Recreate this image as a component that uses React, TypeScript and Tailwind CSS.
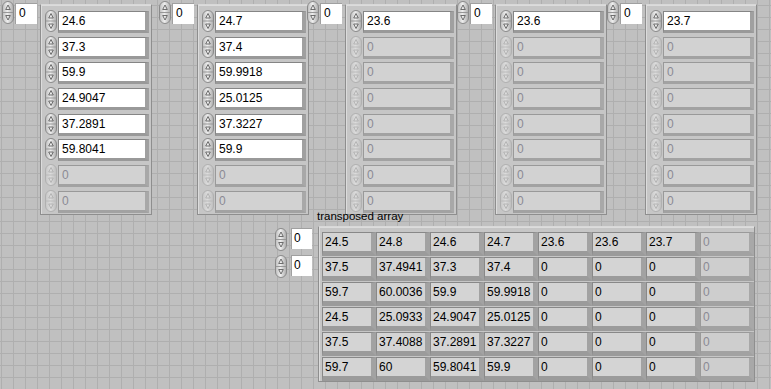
import React from "react";

function Spinner({ disabled = false, h = 22 }: { disabled?: boolean; h?: number }) {
  const mid = h / 2;
  const arrow = disabled ? "#b0b0b0" : "#606060";
  return (
    <svg width="12" height={h} viewBox={`0 0 12 ${h}`} className="block shrink-0">
      <defs>
        <linearGradient id="spg" x1="0" y1="0" x2="1" y2="0">
          <stop offset="0" stopColor="#bcbcbc" />
          <stop offset="0.45" stopColor="#eeeeee" />
          <stop offset="1" stopColor="#aaaaaa" />
        </linearGradient>
        <linearGradient id="spgd" x1="0" y1="0" x2="1" y2="0">
          <stop offset="0" stopColor="#c6c6c6" />
          <stop offset="0.45" stopColor="#dcdcdc" />
          <stop offset="1" stopColor="#bdbdbd" />
        </linearGradient>
      </defs>
      <rect
        x="0.5"
        y="0.5"
        width="11"
        height={h - 1}
        rx="5.5"
        fill={disabled ? "url(#spgd)" : "url(#spg)"}
        stroke={disabled ? "#b0b0b0" : "#8a8a8a"}
      />
      <line x1="1" y1={mid} x2="11" y2={mid} stroke={disabled ? "#bababa" : "#979797"} strokeWidth="1" />
      <path d={`M6 ${mid - 7.5} L8.3 ${mid - 3} H3.7 Z`} fill="none" stroke={arrow} strokeWidth="0.9" />
      <path d={`M3.7 ${mid + 3} H8.3 L6 ${mid + 7.5} Z`} fill="none" stroke={arrow} strokeWidth="0.9" />
    </svg>
  );
}

function IndexBox({ small = false }: { small?: boolean }) {
  return (
    <div className="flex items-start">
      <div className="mt-[1px]">
        <Spinner h={23} />
      </div>
      <div
        className={
          small
            ? "ml-[4px] mt-[1px] w-[21px] h-[21px] bg-white border-t border-l border-t-[#a0a0a0] border-l-[#a0a0a0] pl-[2px] text-[12px] leading-[19px] text-black"
            : "ml-[1px] mt-[3px] w-[22px] h-[21px] bg-white border-t border-l border-t-[#a0a0a0] border-l-[#a0a0a0] pl-[3px] text-[12px] leading-[19px] text-black"
        }
      >
        0
      </div>
    </div>
  );
}

function Elem({ value, disabled }: { value: string; disabled?: boolean }) {
  return (
    <div className="flex items-start h-[22px]">
      <div className="mt-[-1px]">
        <Spinner disabled={disabled} h={22} />
      </div>
      <div
        className={
          disabled
            ? "ml-[1px] w-[91px] h-[22px] border-t border-l border-r-[4px] border-b-[3px] border-t-[#999999] border-l-[#999999] border-r-[#a8a8a8] border-b-[#a2a2a2] bg-[#d2d2d2] pl-[3px] text-[12px] leading-[18px] text-[#8a8a94]"
            : "ml-[1px] w-[91px] h-[22px] border-t border-l border-r-[4px] border-b-[3px] border-t-[#858585] border-l-[#858585] border-r-[#a0a0a0] border-b-[#999999] bg-white pl-[3px] text-[12px] leading-[18px] text-black"
        }
      >
        {value}
      </div>
    </div>
  );
}

function Array1D({ values, ml }: { values: string[]; ml: string }) {
  const items: { v: string; d: boolean }[] = values.map((v) => ({ v, d: false }));
  while (items.length < 8) items.push({ v: "0", d: true });
  return (
    <div className={`flex items-start shrink-0 ${ml}`}>
      <IndexBox />
      <div className="ml-[3px] mt-[4px] w-[112px] border border-t-[#d8d8d8] border-l-[#8e8e8e] border-r-[#8e8e8e] border-b-[#8e8e8e] bg-[#c6c6c6] shadow-[inset_1px_1px_0_#dcdcdc] pl-[4px] pt-[6px] pb-[1px] flex flex-col gap-[3.7px]">
        {items.map((it, i) => (
          <Elem key={i} value={it.v} disabled={it.d} />
        ))}
      </div>
    </div>
  );
}

function Cell({ value, disabled }: { value: string; disabled?: boolean }) {
  return (
    <div
      className={
        disabled
          ? "w-[54px] h-[24px] border-t border-l border-r-[5px] border-b-[5px] border-t-[#9a9a9a] border-l-[#9a9a9a] border-r-[#a8a8a8] border-b-[#a2a2a2] bg-[#cecece] pl-[2px] text-[12px] leading-[18px] text-[#8a8a94]"
          : "w-[54px] h-[24px] border-t border-l border-r-[5px] border-b-[5px] border-t-[#888888] border-l-[#888888] border-r-[#a2a2a2] border-b-[#9b9b9b] bg-[#d4d4d4] pl-[2px] text-[12px] leading-[18px] text-black"
      }
    >
      {value}
    </div>
  );
}

const arrays: { values: string[]; ml: string }[] = [
  { values: ["24.6", "37.3", "59.9", "24.9047", "37.2891", "59.8041"], ml: "ml-[2px]" },
  { values: ["24.7", "37.4", "59.9918", "25.0125", "37.3227", "59.9"], ml: "ml-[7px]" },
  { values: ["23.6"], ml: "ml-[-2px]" },
  { values: ["23.6"], ml: "ml-0" },
  { values: ["23.7"], ml: "ml-0" },
];

const matrix: string[][] = [
  ["24.5", "24.8", "24.6", "24.7", "23.6", "23.6", "23.7"],
  ["37.5", "37.4941", "37.3", "37.4", "0", "0", "0"],
  ["59.7", "60.0036", "59.9", "59.9918", "0", "0", "0"],
  ["24.5", "25.0933", "24.9047", "25.0125", "0", "0", "0"],
  ["37.5", "37.4088", "37.2891", "37.3227", "0", "0", "0"],
  ["59.7", "60", "59.8041", "59.9", "0", "0", "0"],
];

export default function App() {
  return (
    <div className="w-[771px] h-[389px] overflow-hidden bg-[#c0c0c0] [background-image:linear-gradient(to_right,#afafaf_1px,transparent_1px),linear-gradient(to_bottom,#afafaf_1px,transparent_1px)] [background-size:12px_12px] [background-position:1px_5px] font-['Liberation_Sans',Arial,sans-serif] select-none">
      <div className="flex items-start h-[210px]">
        {arrays.map((a, i) => (
          <Array1D key={i} values={a.values} ml={a.ml} />
        ))}
      </div>
      <div className="flex items-start ml-[275px]">
        <div className="mt-[17px] flex flex-col gap-[3px]">
          <IndexBox small />
          <IndexBox small />
        </div>
        <div className="ml-[5px] flex flex-col">
          <div className="h-[13px] text-[11.5px] leading-[13px] text-black whitespace-nowrap">transposed array</div>
          <div className="ml-[1px] mt-[3px] border border-t-[#d8d8d8] border-l-[#8e8e8e] border-r-[#8e8e8e] border-b-[#8e8e8e] bg-[#c6c6c6] shadow-[inset_1px_1px_0_#dcdcdc] pl-[3px] pt-[5px] flex flex-col gap-[1px]">
            {matrix.map((row, r) => (
              <div key={r} className="flex">
                {row.map((v, c) => (
                  <Cell key={c} value={v} />
                ))}
                <Cell value="0" disabled />
              </div>
            ))}
          </div>
        </div>
      </div>
    </div>
  );
}
